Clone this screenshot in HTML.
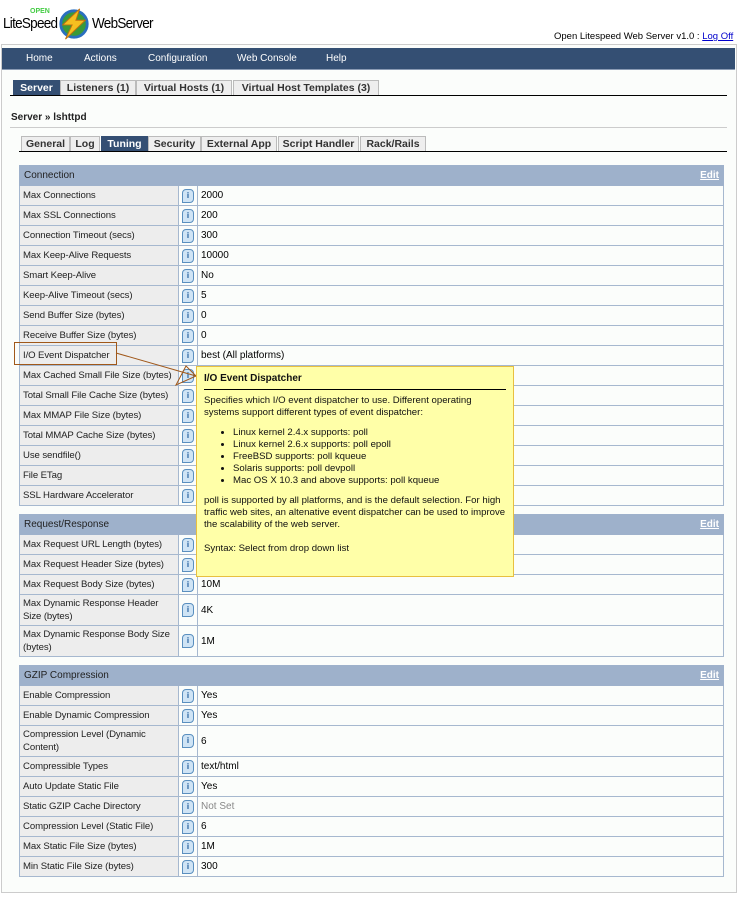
<!DOCTYPE html>
<html><head><style>
body{margin:0;width:738px;height:902px;background:#fff;font-family:"Liberation Sans",Verdana,sans-serif;font-size:10px;color:#000;position:relative;overflow:hidden}
.abs{position:absolute}
.cont{left:1px;top:44px;width:734px;height:847px;border:1px solid #ccc;background:#fbfdfb}
.nav{left:2px;top:48px;width:733px;height:21px;background:#344f73;border-bottom:1px solid #8a9bb4}
.nav span{position:absolute;top:5px;color:#fff;font-size:10px}
.tab{position:absolute;height:15px;background:#eeeeee;border:1px solid #bbb;border-bottom:none;font-weight:bold;font-size:10.5px;color:#333;text-align:center;line-height:15px;font-family:"Liberation Sans",Verdana,sans-serif;white-space:nowrap;overflow:hidden}
.tab.on{background:#344f73;color:#fff;border-color:#344f73}
table{border-collapse:collapse;position:absolute;left:19px;width:705px;font-size:10px;table-layout:fixed}
td{border:1px solid #a6b8cf;padding:0 3px;height:19px;line-height:13px;white-space:nowrap;overflow:hidden}
td.w{white-space:normal}
td.l{background:#ededed;color:#222;font-size:9.6px;letter-spacing:-0.1px}
th{background:#9eb1cb;text-align:left;font-weight:normal;height:19px;padding:0 4px;border:1px solid #9eb1cb;color:#222}
th a{float:right;color:#fff;font-weight:bold;text-decoration:underline}
.ic{display:inline-block;width:10px;height:12px;border:1px solid #5a8fbf;border-radius:4px 4px 4px 0;background:#cfe4f5;color:#1d5a9a;font-size:8px;line-height:12px;text-align:center;font-weight:bold;vertical-align:middle}
.tip{left:196px;top:366px;width:302px;height:197px;background:#ffffa8;border:1px solid #e8c040;padding:6px 7px;font-size:9.6px;line-height:12px;color:#111}
.tip ul{margin:8px 0 8px 0;padding-left:29px}
.tip li{list-style:disc;line-height:12px}
</style></head><body>
<div class="abs" style="left:3px;top:15px;font-size:15px;letter-spacing:-0.8px;transform:scaleX(0.9);transform-origin:left">LiteSpeed</div>
<div class="abs" style="left:30px;top:8px;font-size:7px;color:#4c4;font-weight:bold">OPEN</div>
<svg class="abs" style="left:57px;top:6px" width="34" height="36" viewBox="0 0 36 36"><circle cx="18" cy="18" r="14" fill="#3a9a3a" stroke="#2a6fbf" stroke-width="3"/><path d="M24 2 L6 19 L16 19 L9 34 L30 14 L20 14 Z" fill="#f5c020" stroke="#c07010" stroke-width="1"/></svg>
<div class="abs" style="left:92px;top:15px;font-size:15px;letter-spacing:-0.8px;transform:scaleX(0.9);transform-origin:left">WebServer</div>
<div class="abs" style="left:554px;top:31px;font-size:9.5px;white-space:nowrap">Open Litespeed Web Server v1.0 : <span style="color:#00c;text-decoration:underline">Log Off</span></div>
<div class="abs cont"></div>
<div class="abs nav"><span style="left:24px">Home</span><span style="left:82px">Actions</span><span style="left:146px">Configuration</span><span style="left:235px">Web Console</span><span style="left:324px">Help</span></div>
<div class="tab on" style="left:13px;top:80px;width:45px">Server</div>
<div class="tab" style="left:60px;top:80px;width:74px">Listeners (1)</div>
<div class="tab" style="left:136px;top:80px;width:94px">Virtual Hosts (1)</div>
<div class="tab" style="left:233px;top:80px;width:144px">Virtual Host Templates (3)</div>
<div class="abs" style="left:10px;top:95px;width:717px;height:1px;background:#000"></div>
<div class="abs" style="left:11px;top:112px;font-size:10px;font-weight:bold;color:#222">Server » lshttpd</div>
<div class="abs" style="left:10px;top:127px;width:717px;height:1px;background:#ccc"></div>
<div class="tab" style="left:21px;top:136px;width:47px">General</div>
<div class="tab" style="left:70px;top:136px;width:28px">Log</div>
<div class="tab on" style="left:101px;top:136px;width:45px">Tuning</div>
<div class="tab" style="left:148px;top:136px;width:51px">Security</div>
<div class="tab" style="left:201px;top:136px;width:74px">External App</div>
<div class="tab" style="left:278px;top:136px;width:79px">Script Handler</div>
<div class="tab" style="left:360px;top:136px;width:64px">Rack/Rails</div>
<div class="abs" style="left:19px;top:151px;width:708px;height:1px;background:#000"></div>

<table style="top:165px">
<colgroup><col style="width:159px"><col style="width:19px"><col></colgroup>
<tr><th colspan="3">Connection <a>Edit</a></th></tr>
<tr><td class="l">Max Connections</td><td class="i"><span class="ic">i</span></td><td>2000</td></tr>
<tr><td class="l">Max SSL Connections</td><td class="i"><span class="ic">i</span></td><td>200</td></tr>
<tr><td class="l">Connection Timeout (secs)</td><td class="i"><span class="ic">i</span></td><td>300</td></tr>
<tr><td class="l">Max Keep-Alive Requests</td><td class="i"><span class="ic">i</span></td><td>10000</td></tr>
<tr><td class="l">Smart Keep-Alive</td><td class="i"><span class="ic">i</span></td><td>No</td></tr>
<tr><td class="l">Keep-Alive Timeout (secs)</td><td class="i"><span class="ic">i</span></td><td>5</td></tr>
<tr><td class="l">Send Buffer Size (bytes)</td><td class="i"><span class="ic">i</span></td><td>0</td></tr>
<tr><td class="l">Receive Buffer Size (bytes)</td><td class="i"><span class="ic">i</span></td><td>0</td></tr>
<tr><td class="l">I/O Event Dispatcher</td><td class="i"><span class="ic">i</span></td><td>best (All platforms)</td></tr>
<tr><td class="l">Max Cached Small File Size (bytes)</td><td class="i"><span class="ic">i</span></td><td></td></tr>
<tr><td class="l">Total Small File Cache Size (bytes)</td><td class="i"><span class="ic">i</span></td><td></td></tr>
<tr><td class="l">Max MMAP File Size (bytes)</td><td class="i"><span class="ic">i</span></td><td></td></tr>
<tr><td class="l">Total MMAP Cache Size (bytes)</td><td class="i"><span class="ic">i</span></td><td></td></tr>
<tr><td class="l">Use sendfile()</td><td class="i"><span class="ic">i</span></td><td></td></tr>
<tr><td class="l">File ETag</td><td class="i"><span class="ic">i</span></td><td></td></tr>
<tr><td class="l">SSL Hardware Accelerator</td><td class="i"><span class="ic">i</span></td><td></td></tr>
</table>

<table style="top:514px">
<colgroup><col style="width:159px"><col style="width:19px"><col></colgroup>
<tr><th colspan="3">Request/Response <a>Edit</a></th></tr>
<tr><td class="l">Max Request URL Length (bytes)</td><td class="i"><span class="ic">i</span></td><td></td></tr>
<tr><td class="l">Max Request Header Size (bytes)</td><td class="i"><span class="ic">i</span></td><td></td></tr>
<tr><td class="l">Max Request Body Size (bytes)</td><td class="i"><span class="ic">i</span></td><td>10M</td></tr>
<tr><td class="l w" style="height:30px">Max Dynamic Response Header Size (bytes)</td><td class="i"><span class="ic">i</span></td><td>4K</td></tr>
<tr><td class="l w" style="height:30px">Max Dynamic Response Body Size (bytes)</td><td class="i"><span class="ic">i</span></td><td>1M</td></tr>
</table>

<table style="top:665px">
<colgroup><col style="width:159px"><col style="width:19px"><col></colgroup>
<tr><th colspan="3">GZIP Compression <a>Edit</a></th></tr>
<tr><td class="l">Enable Compression</td><td class="i"><span class="ic">i</span></td><td>Yes</td></tr>
<tr><td class="l">Enable Dynamic Compression</td><td class="i"><span class="ic">i</span></td><td>Yes</td></tr>
<tr><td class="l w" style="height:30px">Compression Level (Dynamic Content)</td><td class="i"><span class="ic">i</span></td><td>6</td></tr>
<tr><td class="l">Compressible Types</td><td class="i"><span class="ic">i</span></td><td>text/html</td></tr>
<tr><td class="l">Auto Update Static File</td><td class="i"><span class="ic">i</span></td><td>Yes</td></tr>
<tr><td class="l">Static GZIP Cache Directory</td><td class="i"><span class="ic">i</span></td><td style="color:#888">Not Set</td></tr>
<tr><td class="l">Compression Level (Static File)</td><td class="i"><span class="ic">i</span></td><td>6</td></tr>
<tr><td class="l">Max Static File Size (bytes)</td><td class="i"><span class="ic">i</span></td><td>1M</td></tr>
<tr><td class="l">Min Static File Size (bytes)</td><td class="i"><span class="ic">i</span></td><td>300</td></tr>
</table>

<div class="abs" style="left:14px;top:342px;width:101px;height:21px;border:1px solid #a0581a"></div>
<svg class="abs" style="left:0;top:0" width="738" height="902"><path d="M116 353 L196 376 M196 376 L176 385 L186 366 Z" stroke="#a0581a" fill="none" stroke-width="1"/></svg>
<div class="abs tip"><b style="font-size:10px">I/O Event Dispatcher</b><div style="border-top:1px solid #000;margin:4px 0 5px"></div>Specifies which I/O event dispatcher to use. Different operating systems support different types of event dispatcher:<ul><li>Linux kernel 2.4.x supports: poll</li><li>Linux kernel 2.6.x supports: poll epoll</li><li>FreeBSD supports: poll kqueue</li><li>Solaris supports: poll devpoll</li><li>Mac OS X 10.3 and above supports: poll kqueue</li></ul>poll is supported by all platforms, and is the default selection. For high traffic web sites, an altenative event dispatcher can be used to improve the scalability of the web server.<br><br>Syntax: Select from drop down list</div>
</body></html>
